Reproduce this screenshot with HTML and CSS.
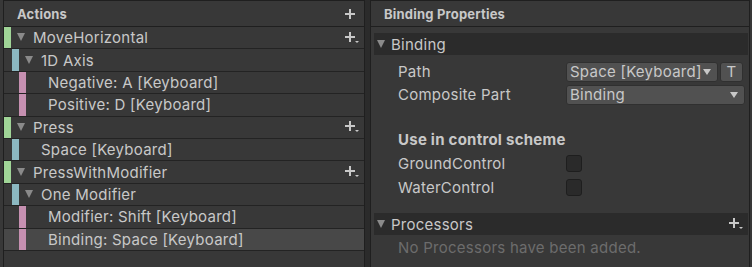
FILE: index.html
```html
<!DOCTYPE html>
<html lang="en">
<head>
    <meta charset="UTF-8">
    <title>Input Actions</title>
    <link rel="stylesheet" href="styles.css">
</head>
<body>
    <div class="window">
        <section class="panel actions">
            <div class="panel-head">
                <span class="panel-title">Actions</span>
                <svg class="plus" width="12" height="12" viewBox="0 0 12 12"><path d="M6 1v10M1 6h10" stroke="#c8c8c8" stroke-width="2"/></svg>
            </div>
            <div class="tree">
                <div class="row d0"><span class="bar action"></span><span class="slot"><i class="arrow"></i></span><span class="label">MoveHorizontal</span>
                    <svg class="plus-menu" width="16" height="14" viewBox="0 0 16 14"><path d="M6 1v10M1 6h10" stroke="#c8c8c8" stroke-width="2"/><path d="M11 10h4l-2 2z" fill="#c8c8c8"/></svg></div>
                <div class="row d1"><span class="bar composite"></span><span class="slot"><i class="arrow"></i></span><span class="label">1D Axis</span></div>
                <div class="row d2"><span class="bar part"></span><span class="slot"></span><span class="label">Negative: A [Keyboard]</span></div>
                <div class="row d2"><span class="bar part"></span><span class="slot"></span><span class="label">Positive: D [Keyboard]</span></div>
                <div class="row d0"><span class="bar action"></span><span class="slot"><i class="arrow"></i></span><span class="label">Press</span>
                    <svg class="plus-menu" width="16" height="14" viewBox="0 0 16 14"><path d="M6 1v10M1 6h10" stroke="#c8c8c8" stroke-width="2"/><path d="M11 10h4l-2 2z" fill="#c8c8c8"/></svg></div>
                <div class="row d1"><span class="bar composite"></span><span class="slot"></span><span class="label">Space [Keyboard]</span></div>
                <div class="row d0"><span class="bar action"></span><span class="slot"><i class="arrow"></i></span><span class="label">PressWithModifier</span>
                    <svg class="plus-menu" width="16" height="14" viewBox="0 0 16 14"><path d="M6 1v10M1 6h10" stroke="#c8c8c8" stroke-width="2"/><path d="M11 10h4l-2 2z" fill="#c8c8c8"/></svg></div>
                <div class="row d1"><span class="bar composite"></span><span class="slot"><i class="arrow"></i></span><span class="label">One Modifier</span></div>
                <div class="row d2"><span class="bar part"></span><span class="slot"></span><span class="label">Modifier: Shift [Keyboard]</span></div>
                <div class="row d2 selected"><span class="bar part"></span><span class="slot"></span><span class="label">Binding: Space [Keyboard]</span></div>
            </div>
        </section>

        <div class="split"></div>

        <section class="panel props">
            <div class="panel-head">
                <span class="panel-title">Binding Properties</span>
            </div>
            <div class="props-body">
                <div class="foldout"><i class="arrow"></i><span>Binding</span></div>
                <div class="prop-row">
                    <span class="prop-label">Path</span>
                    <div class="prop-value">
                        <div class="dropdown path">Space [Keyboard]<i class="drop-arrow"></i></div>
                        <div class="t-button">T</div>
                    </div>
                </div>
                <div class="prop-row">
                    <span class="prop-label">Composite Part</span>
                    <div class="prop-value">
                        <div class="dropdown wide">Binding<i class="drop-arrow"></i></div>
                    </div>
                </div>

                <div class="scheme-title">Use in control scheme</div>
                <div class="check-row">
                    <span class="prop-label">GroundControl</span>
                    <span class="checkbox"></span>
                </div>
                <div class="check-row">
                    <span class="prop-label">WaterControl</span>
                    <span class="checkbox"></span>
                </div>

                <div class="foldout processors"><i class="arrow"></i><span>Processors</span>
                    <svg class="plus-menu" width="16" height="14" viewBox="0 0 16 14"><path d="M6 1v10M1 6h10" stroke="#c8c8c8" stroke-width="2"/><path d="M11 10h4l-2 2z" fill="#c8c8c8"/></svg></div>
                <div class="empty-note">No Processors have been added.</div>
            </div>
        </section>
    </div>
</body>
</html>
```

FILE: styles.css
```css
body {
    margin: 0;
    background-color: #383838;
    font-family: Inter, "Noto Sans", sans-serif;
    font-size: 15px;
    letter-spacing: 0.25px;
    color: #c8c8c8;
}
.window {
    display: flex;
    height: 267px;
    padding-left: 3px;
}
.panel {
    border: 1px solid #1f1f1f;
    border-bottom: none;
    background-color: #383838;
}
.actions {
    width: 360px;
}
.split {
    width: 5px;
    background-color: #2b2b2b;
}
.props {
    width: 378px;
}
.panel-head {
    height: 25px;
    border-bottom: 1px solid #1f1f1f;
    display: flex;
    align-items: center;
    justify-content: space-between;
    padding: 0 8px 0 13px;
}
.panel-title {
    font-size: 13px;
    font-weight: bold;
    letter-spacing: 0.2px;
}
.props .panel-head {
    padding-left: 13px;
}

/* tree */
.row {
    height: 22.4px;
    box-sizing: border-box;
    border-bottom: 1px solid #232323;
    display: flex;
    align-items: stretch;
}
.row.selected {
    background-color: #484848;
}
.d1 {
    padding-left: 8px;
}
.d2 {
    padding-left: 15px;
}
.bar {
    width: 7px;
    flex-shrink: 0;
}
.bar.action {
    background-color: #a0d597;
}
.bar.composite {
    background-color: #8cb8c1;
}
.bar.part {
    background-color: #c690b1;
}
.slot {
    width: 22px;
    flex-shrink: 0;
    display: flex;
    align-items: center;
}
.arrow {
    display: block;
    width: 0;
    height: 0;
    border-left: 4.5px solid transparent;
    border-right: 4.5px solid transparent;
    border-top: 8px solid #8a8a8a;
    margin-left: 6px;
    margin-top: -1px;
}
.label {
    flex: 1;
    display: flex;
    align-items: center;
    white-space: nowrap;
}
.row .plus-menu {
    align-self: center;
    margin-right: 4px;
}

/* properties */
.props-body {
    padding: 6px 1px 0 3px;
}
.foldout {
    height: 22px;
    background-color: #2b2b2b;
    display: flex;
    align-items: center;
}
.foldout .arrow {
    margin-right: 6px;
    margin-left: 3px;
}
.foldout .plus-menu {
    margin-left: auto;
    margin-right: 4px;
}
.prop-row {
    height: 23px;
    display: flex;
    align-items: center;
}
.foldout + .prop-row {
    margin-top: 5px;
}
.prop-label {
    width: 168px;
    padding-left: 24px;
    flex-shrink: 0;
}
.prop-value {
    display: flex;
    gap: 2px;
    width: 179px;
}
.dropdown {
    height: 20px;
    box-sizing: border-box;
    background-color: #515151;
    border: 1px solid #303030;
    border-radius: 3px;
    display: flex;
    align-items: center;
    padding: 0 6px 0 3px;
    white-space: nowrap;
}
.dropdown.path {
    width: 152px;
}
.dropdown.wide {
    flex: 1;
}
.drop-arrow {
    width: 0;
    height: 0;
    border-left: 4px solid transparent;
    border-right: 4px solid transparent;
    border-top: 6px solid #c8c8c8;
    margin-left: auto;
}
.t-button {
    width: 23px;
    height: 20px;
    box-sizing: border-box;
    background-color: #515151;
    border: 1px solid #303030;
    border-radius: 3px;
    display: flex;
    align-items: center;
    justify-content: center;
}
.scheme-title {
    margin-top: 21px;
    height: 24px;
    display: flex;
    align-items: center;
    padding-left: 24px;
    font-weight: bold;
}
.check-row {
    height: 24px;
    display: flex;
    align-items: center;
}
.checkbox {
    width: 16px;
    height: 17px;
    box-sizing: border-box;
    background-color: #2a2a2a;
    border: 1px solid #1e1e1e;
    border-radius: 3px;
}
.foldout.processors {
    margin-top: 14px;
}
.empty-note {
    height: 24px;
    display: flex;
    align-items: center;
    padding-left: 24px;
    color: #6c6c6c;
}
```
